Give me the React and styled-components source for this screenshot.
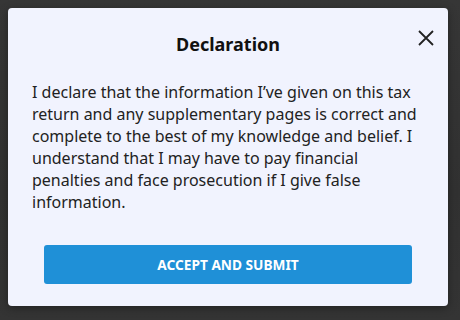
import React from 'react'
import styled, { createGlobalStyle } from 'styled-components'

const Global = createGlobalStyle`
  html, body {
    margin: 0;
    padding: 0;
    background: #343434;
    font-family: 'Noto Sans', 'Open Sans', sans-serif;
  }
`;

const Backdrop = styled.div`
  width: 460px;
  height: 320px;
  padding: 8px;
  box-sizing: border-box;
  background: linear-gradient(180deg, #363636 0%, #313131 60%, #343434 100%);
`;

const Dialog = styled.div`
  position: relative;
  width: 440px;
  height: 298px;
  box-sizing: border-box;
  padding: 24px 24px 22px;
  background: #f1f3fe;
  border-radius: 4px;
  box-shadow: 0 2px 8px rgba(0, 0, 0, 0.35);
  display: flex;
  flex-direction: column;
`;

const Close = styled.button`
  position: absolute;
  top: 14px;
  right: 6px;
  width: 32px;
  height: 32px;
  padding: 0;
  border: none;
  background: transparent;
  display: flex;
  align-items: center;
  justify-content: center;
  cursor: pointer;
`;

const Title = styled.h2`
  margin: 0 0 24px;
  font-size: 18px;
  line-height: 25px;
  font-weight: 700;
  color: #111;
  text-align: center;
`;

const Body = styled.p`
  margin: 0 0 32px;
  font-size: 16px;
  line-height: 22px;
  color: #222;
`;

const Submit = styled.button`
  margin: 0 12px;
  height: 39px;
  border: none;
  border-radius: 3px;
  background: #1f90d7;
  color: #fff;
  font-family: inherit;
  font-size: 13.7px;
  font-weight: 700;
  text-transform: uppercase;
  cursor: pointer;
`;

export default function App() {
  return (
    <>
      <Global />
      <Backdrop>
        <Dialog>
          <Close aria-label="Close">
            <svg width="16" height="16" viewBox="0 0 16 16">
              <path d="M1 1 L15 15 M15 1 L1 15" stroke="#222" strokeWidth="1.8" fill="none" />
            </svg>
          </Close>
          <Title>Declaration</Title>
          <Body>
            I declare that the information I’ve given on this tax return and any
            supplementary pages is correct and complete to the best of my knowledge
            and belief. I understand that I may have to pay financial penalties and
            face prosecution if I give false information.
          </Body>
          <Submit>Accept and submit</Submit>
        </Dialog>
      </Backdrop>
    </>
  )
}
